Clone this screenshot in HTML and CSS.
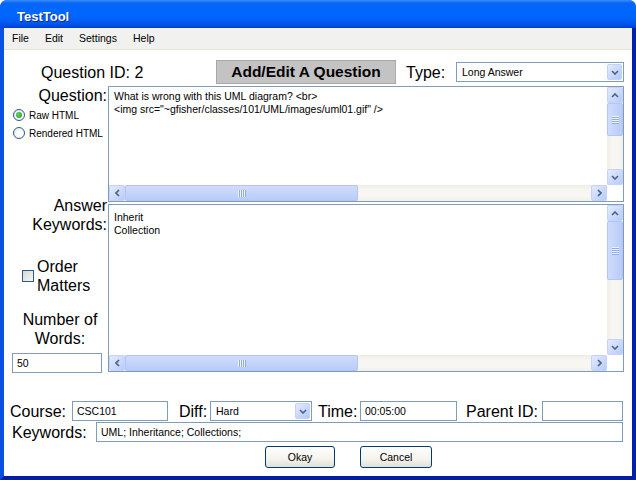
FILE: index.html
```
<!DOCTYPE html>
<html>
<head>
<meta charset="utf-8">
<title>TestTool</title>
<link rel="stylesheet" href="styles.css">
</head>
<body>
<div class="window">
  <div class="titlebar"><span class="title">TestTool</span></div>
  <div class="frame">
    <div class="menubar">
      <span class="menu-item">File</span>
      <span class="menu-item">Edit</span>
      <span class="menu-item">Settings</span>
      <span class="menu-item">Help</span>
    </div>
    <div class="content">
      <div class="header-row">
        <div class="lbl qid">Question ID: 2</div>
        <div class="heading">Add/Edit A Question</div>
        <div class="lbl type-lbl">Type:</div>
        <div class="select type-select">
          <span class="sel-text">Long Answer</span>
          <span class="dd-btn"><svg width="8" height="5" viewBox="0 0 8 5"><path d="M1 1l3 3 3-3" fill="none" stroke="#4d6185" stroke-width="1.6"/></svg></span>
        </div>
      </div>

      <div class="section question-sec">
        <div class="side">
          <div class="lbl side-lbl">Question:</div>
          <div class="radio-row first"><span class="radio checked"></span>Raw HTML</div>
          <div class="radio-row"><span class="radio"></span>Rendered HTML</div>
        </div>
        <div class="textbox">
          <div class="tb-text q-text">What is wrong with this UML diagram? &lt;br&gt;<br>&lt;img src="~gfisher/classes/101/UML/images/uml01.gif" /&gt;</div>
          <div class="vbar">
            <span class="sbtn"><svg width="8" height="5" viewBox="0 0 8 5"><path d="M1 4l3-3 3 3" fill="none" stroke="#4d6185" stroke-width="1.6"/></svg></span>
            <span class="vthumb thumb-q"><span class="grip-v"></span></span>
            <span class="vtrack"></span>
            <span class="sbtn"><svg width="8" height="5" viewBox="0 0 8 5"><path d="M1 1l3 3 3-3" fill="none" stroke="#4d6185" stroke-width="1.6"/></svg></span>
          </div>
          <div class="hbar">
            <span class="sbtn"><svg width="5" height="8" viewBox="0 0 5 8"><path d="M4 1L1 4l3 3" fill="none" stroke="#4d6185" stroke-width="1.6"/></svg></span>
            <span class="hthumb"><span class="grip-h"></span></span>
            <span class="htrack"></span>
            <span class="sbtn"><svg width="5" height="8" viewBox="0 0 5 8"><path d="M1 1l3 3-3 3" fill="none" stroke="#4d6185" stroke-width="1.6"/></svg></span>
          </div>
          <div class="corner"></div>
        </div>
      </div>

      <div class="section answer-sec">
        <div class="side">
          <div class="lbl side-lbl ans-lbl">Answer<br>Keywords:</div>
          <div class="order">
            <span class="checkbox"></span>
            <span class="lbl order-text">Order<br>Matters</span>
          </div>
          <div class="lbl words-lbl">Number of<br>Words:</div>
          <div class="input words-input">50</div>
        </div>
        <div class="textbox">
          <div class="tb-text a-text">Inherit<br>Collection</div>
          <div class="vbar">
            <span class="sbtn"><svg width="8" height="5" viewBox="0 0 8 5"><path d="M1 4l3-3 3 3" fill="none" stroke="#4d6185" stroke-width="1.6"/></svg></span>
            <span class="vthumb thumb-a"><span class="grip-v"></span></span>
            <span class="vtrack"></span>
            <span class="sbtn"><svg width="8" height="5" viewBox="0 0 8 5"><path d="M1 1l3 3 3-3" fill="none" stroke="#4d6185" stroke-width="1.6"/></svg></span>
          </div>
          <div class="hbar">
            <span class="sbtn"><svg width="5" height="8" viewBox="0 0 5 8"><path d="M4 1L1 4l3 3" fill="none" stroke="#4d6185" stroke-width="1.6"/></svg></span>
            <span class="hthumb"><span class="grip-h"></span></span>
            <span class="htrack"></span>
            <span class="sbtn"><svg width="5" height="8" viewBox="0 0 5 8"><path d="M1 1l3 3-3 3" fill="none" stroke="#4d6185" stroke-width="1.6"/></svg></span>
          </div>
          <div class="corner"></div>
        </div>
      </div>

      <div class="field-row row-meta">
        <span class="lbl course-lbl">Course:</span>
        <span class="input course-input">CSC101</span>
        <span class="lbl diff-lbl">Diff:</span>
        <span class="select diff-select">
          <span class="sel-text">Hard</span>
          <span class="dd-btn"><svg width="8" height="5" viewBox="0 0 8 5"><path d="M1 1l3 3 3-3" fill="none" stroke="#4d6185" stroke-width="1.6"/></svg></span>
        </span>
        <span class="lbl time-lbl">Time:</span>
        <span class="input time-input">00:05:00</span>
        <span class="lbl parent-lbl">Parent ID:</span>
        <span class="input parent-input"></span>
      </div>
      <div class="field-row row-kw">
        <span class="lbl kw-lbl">Keywords:</span>
        <span class="input kw-input">UML; Inheritance; Collections;</span>
      </div>
      <div class="button-row">
        <span class="btn okay-btn">Okay</span>
        <span class="btn cancel-btn">Cancel</span>
      </div>
    </div>
  </div>
</div>
</body>
</html>
```
FILE: styles.css
```
* { box-sizing: border-box; }
html, body { margin: 0; padding: 0; background: #fff; }
body {
  width: 636px; height: 480px; overflow: hidden;
  font-family: "Liberation Sans", Arial, sans-serif;
  color: #000;
}
.window {
  width: 636px; height: 480px;
  display: flex; flex-direction: column;
  border-radius: 7px 7px 0 0;
  overflow: hidden;
  background: #0a4ee0;
}
.titlebar {
  height: 28px; flex: none;
  padding: 4px 0 0 17px;
  background: linear-gradient(to bottom, #3a8ff5 0px, #0a64f6 3px, #0068ff 8px, #0064fc 18px, #0054ea 24px, #0040d4 28px);
}
.title {
  display: block;
  color: #fff; font-weight: bold; font-size: 13px; line-height: 25px;
  text-shadow: 1px 1px 0 #0a2a9a;
}
.frame {
  flex: 1; display: flex; flex-direction: column;
  border-left: 4px solid #0b50e4;
  border-right: 4px solid #0020b4;
  border-bottom: 4px solid #001fa6;
  background: #fff;
}
.menubar {
  height: 22px; flex: none;
  display: flex;
  background: #f1f1ef;
  border-bottom: 1px solid #ebe6d4;
}
.menu-item { padding: 0 8px; font-size: 10.5px; line-height: 21px; }
.content { flex: 1; display: flex; flex-direction: column; }
.lbl { font-size: 16px; line-height: 19px; white-space: nowrap; }

.header-row { display: flex; align-items: center; height: 24px; margin-top: 10px; }
.qid { margin-left: 37px; width: 175px; }
.heading {
  width: 180px; height: 24px;
  background: #c3c3c3; border: 1px solid #a9a9a9;
  display: flex; align-items: center; justify-content: center;
  font-weight: bold; font-size: 15.5px;
}
.type-lbl { margin-left: 10px; width: 50px; }
.select {
  display: flex; align-items: center;
  height: 20px; border: 1px solid #7f9db9; background: #fff;
}
.type-select { width: 168px; }
.sel-text { flex: 1; padding-left: 5px; font-size: 10.5px; }
.dd-btn {
  width: 15px; height: 16px; margin-right: 1px;
  border: 1px solid #c2d2fb; border-radius: 2px;
  background: linear-gradient(135deg, #e3ebfe, #b4c7f7);
  display: flex; align-items: center; justify-content: center;
}

.section { display: flex; margin-top: 2px; }
.question-sec { height: 116px; }
.answer-sec { height: 168px; }
.side { width: 104px; flex: none; display: flex; flex-direction: column; }
.side-lbl { text-align: right; padding-right: 1px; }
.ans-lbl { margin-top: -8px; }
.radio-row {
  display: flex; align-items: center; gap: 4px;
  margin-left: 9px; margin-top: 6px; height: 12px; font-size: 10px;
}
.radio-row.first { margin-top: 4px; }
.radio {
  width: 12px; height: 12px; border-radius: 50%;
  border: 1px solid #2a5b8c;
  background: radial-gradient(circle at 60% 60%, #fff 30%, #e0e0dc 100%);
  display: flex; align-items: center; justify-content: center;
}
.radio.checked::after {
  content: ""; width: 6px; height: 6px; border-radius: 50%;
  background: radial-gradient(circle at 40% 40%, #5fd35f, #21a121);
}
.order { display: flex; align-items: center; margin-left: 18px; margin-top: 23px; }
.checkbox {
  width: 12px; height: 12px; border: 1px solid #2a5b8c;
  background: linear-gradient(135deg, #d8d8d2, #f6f6f4);
}
.order-text { margin-left: 3px; }
.words-lbl { margin-top: 15px; padding-left: 8px; text-align: center; }
.input {
  height: 20px; border: 1px solid #7f9db9; background: #fff;
  font-size: 10.5px; line-height: 18px; padding-left: 4px; white-space: nowrap;
}
.words-input { margin-left: 8px; margin-top: 5px; width: 90px; }

.textbox {
  width: 516px; height: 100%;
  border: 1px solid #7f9db9;
  display: grid; grid-template-columns: 1fr 16px; grid-template-rows: 1fr 16px;
}
.tb-text { font-size: 10.5px; line-height: 13px; padding-left: 5px; white-space: nowrap; }
.q-text { padding-top: 3px; }
.a-text { padding-top: 6px; }
.vbar {
  display: flex; flex-direction: column;
  background: linear-gradient(to right, #eeede6, #f7f6f2 30%, #f7f6f2 75%, #f0efe9);
}
.hbar {
  display: flex;
  background: linear-gradient(to bottom, #eeede6, #f7f6f2 30%, #f7f6f2 75%, #f0efe9);
}
.corner { background: #fff; }
.sbtn {
  width: 16px; height: 16px; flex: none;
  border: 1px solid #c4d3fb; border-radius: 2px;
  background: linear-gradient(135deg, #e3ebfe, #b8caf8);
  display: flex; align-items: center; justify-content: center;
}
.vtrack, .htrack { flex: 1; }
.vthumb {
  width: 16px; flex: none;
  border: 1px solid #b3c6f2; border-radius: 2px;
  background: linear-gradient(to right, #cfdcfd, #b9cbf8);
  display: flex; align-items: center; justify-content: center;
}
.thumb-q { height: 33px; }
.thumb-a { height: 59px; }
.hthumb {
  height: 16px; width: 233px; flex: none;
  border: 1px solid #b3c6f2; border-radius: 2px;
  background: linear-gradient(to bottom, #cfdcfd, #b9cbf8);
  display: flex; align-items: center; justify-content: center;
}
.grip-v { width: 7px; height: 8px; background: repeating-linear-gradient(to bottom, #eef4fe 0 1px, #8ea9ec 1px 2px); }
.grip-h { width: 8px; height: 7px; background: repeating-linear-gradient(to right, #eef4fe 0 1px, #8ea9ec 1px 2px); }

.field-row { display: flex; align-items: center; height: 20px; }
.row-meta { margin-top: 29px; }
.row-kw { margin-top: 1px; }
.course-lbl { margin-left: 6px; width: 62px; }
.course-input { width: 96px; }
.diff-lbl { margin-left: 11px; width: 31px; }
.diff-select { width: 102px; }
.time-lbl { margin-left: 6px; width: 42px; }
.time-input { width: 97px; }
.parent-lbl { margin-left: 9px; width: 76px; }
.parent-input { width: 81px; }
.kw-lbl { margin-left: 8px; width: 84px; }
.kw-input { width: 527px; }

.button-row { display: flex; margin-top: 4px; height: 22px; }
.btn {
  height: 22px;
  border: 1px solid #003c74; border-radius: 3px;
  background: linear-gradient(to bottom, #ffffff 0%, #f4f3ee 60%, #e3e0d6 100%);
  font-size: 10.5px;
  display: flex; align-items: center; justify-content: center;
}
.okay-btn { margin-left: 261px; width: 70px; }
.cancel-btn { margin-left: 25px; width: 72px; }
```
